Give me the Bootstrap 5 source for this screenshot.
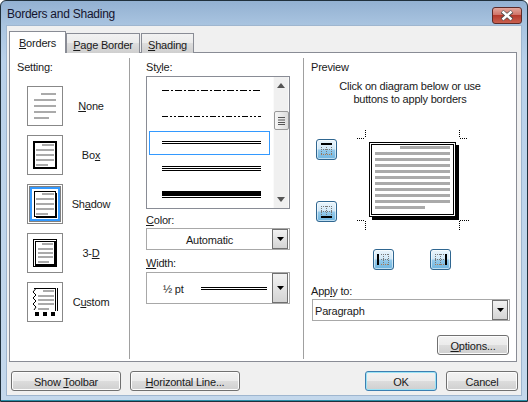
<!DOCTYPE html>
<html lang="en"><head><meta charset="utf-8"><title>Borders and Shading</title>
<link href="https://cdn.jsdelivr.net/npm/bootstrap@5.3.0/dist/css/bootstrap.min.css" rel="stylesheet">
<style>
html,body{margin:0;background:#fff}
body{font-family:"Liberation Sans",Arial,sans-serif;font-size:11px;line-height:13px;letter-spacing:-.2px;color:#1a1a1a}
u{text-underline-offset:1px}
.dlg-win{width:528px;height:402px;overflow:hidden;display:flex;flex-direction:column;border:1px solid #20303c;border-radius:6px 6px 0 0;background:linear-gradient(#93b1d2 0,#a9c4e0 24px,#b9d1ea 60px,#c4d8ec 100%);box-shadow:inset 0 -1px 0 #2a8fa8}
.dlg-title{height:24px;flex:none;padding:0 0 0 6px;font-size:12px;letter-spacing:-.25px;color:#14142e}
.dlg-title span{padding-top:2px}
.dlg-x{width:30px;height:17px;margin:4px 5px 0 0;padding:0;border:1px solid #5c2a28;border-radius:3px;background:linear-gradient(#e4a79c,#d07468 45%,#b53a2c 50%,#c9604f);line-height:0}
.dlg-main{flex:1;margin:0 5px 5px;background:#f0f0f0;padding:7px 5px 4px 3px;display:flex;flex-direction:column;box-shadow:0 0 0 1px #9fb6cf inset}
.dlg-tabs{border:0;height:21px;flex:none;align-items:flex-end;gap:1px;position:relative;z-index:1;margin-bottom:-1px;flex-wrap:nowrap}
.dlg-tab{height:20px;width:74px;padding:5px 0 0;border:1px solid #898c95;border-bottom:0;background:linear-gradient(#f2f2f2,#ebebeb 50%,#dddddd 50%,#cfcfcf);white-space:nowrap;text-align:center}
.dlg-tab.cur{height:22px;width:57px;padding-top:5px;margin-right:-1px;background:#fff;position:relative;z-index:1}
.dlg-tab.nar{width:53px}
.dlg-pane{height:310px;flex:none;background:#fff;border:1px solid #898c95;display:flex}
.cset{width:119px;padding-left:7px;flex:none}
.cstyle{width:174px;flex:none;padding-left:16px;border-left:1px solid #a0a0a0}
.cprev{flex:1;padding-left:7px;border-left:1px solid #a0a0a0}
.cset,.cstyle,.cprev{height:301px;margin-top:5px}
.lbl{height:16px;line-height:18px;display:block}
.setrow{height:40px;margin-bottom:9px;margin-left:10px}
.setrow svg{display:block;flex:none}
.setname{width:56px;text-align:center}
.stylebox{height:133px;width:144px;margin-top:2px;border:1px solid #898c95}
.stylelines{width:125px;padding-left:2px;flex:none}
.sline{height:26px;padding-left:13px;margin-right:2px}
.sline svg{display:block}
.sline.sel{height:24px;margin-top:2px;border:1px solid #3399ff;padding-left:12px;padding-bottom:2px}
.sbar{width:16px;flex:none;background:#f0f0f0;border-left:1px solid #fafafa;border-right:1px solid #fafafa}
.sbar-arrow{height:17px}
.sthumb{height:19px;width:15px;margin-top:17px;border:1px solid #999;border-radius:2px;background:linear-gradient(90deg,#f6f6f6,#dcdcdc)}
.cbox{width:144px;height:22px;margin-top:1px;border:1px solid #a8a8a8;background:#fff}
.cbox-btn{width:16px;margin:0 1px 0 auto;flex:none;border:1px solid #707070;background:linear-gradient(#f2f2f2,#d4d4d4)}
.cbox-txt{flex:1;text-align:center}
.boxtxt{padding-top:2px}
.tall{height:32px}
.clicktxt{width:200px;margin:6px 0 0 -1px;height:25px;text-align:center}
.diag{margin-top:24px}
.arrbtns{width:21px;margin:10px 20px 0 5px;gap:41px}
.bbtn{width:21px;height:21px;padding:0;border:1px solid #2f6690;border-radius:3px;background:linear-gradient(#eaf5fc,#d3e9f7 45%,#93c9ea 55%,#6fb5df);box-shadow:inset 0 0 0 1px rgba(255,255,255,.55);line-height:0;flex:none}
.bbtn svg{display:block}
.botbtns{margin:18px 0 0 16px;gap:36px}
.applybox{width:198px;height:22px;margin:1px 0 0 1px;border:1px solid #a8a8a8;background:#fff;padding-left:2px}
.wbtn{height:20px;padding:2px 0 0;font-size:11px;line-height:16px;letter-spacing:-.2px;color:#1a1a1a;border:1px solid #707070;border-radius:3px;background:linear-gradient(#f2f2f2,#ebebeb 50%,#dddddd 50%,#cfcfcf);box-shadow:inset 0 0 0 1px #fcfcfc}
.wbtn:hover{color:#1a1a1a;border-color:#707070}
.wbtn.def{border-color:#3c7fb1;box-shadow:inset 0 0 0 1px #9be3f5}
.optbtn{width:72px;margin:14px 0 0 126px;display:block}
.foot{margin:9px -1px 0 0;padding-left:2px;height:20px;align-items:flex-start}
.w110{width:110px}.w72{width:72px}
.gap-l{margin-left:9px}
.top12{margin-top:12px}.top2{margin-top:2px}
.spc{height:12px}
.wtxt{width:54px}
</style></head><body>
<div class="dlg-win">
 <div class="dlg-title d-flex align-items-center justify-content-between">
  <span>Borders and Shading</span>
  <button class="dlg-x d-flex align-items-center justify-content-center" aria-label="Close"><svg width="14" height="11" viewBox="0 0 14 11"><path d="M2 1.5 L12 9.5 M12 1.5 L2 9.5" stroke="#4a4a4a" stroke-width="4"/><path d="M2.5 1.5 L11.5 9.5 M11.5 1.5 L2.5 9.5" stroke="#fff" stroke-width="2.4"/></svg></button>
 </div>
 <div class="dlg-main">
  <div class="nav dlg-tabs">
   <div class="dlg-tab cur"><u>B</u>orders</div>
   <div class="dlg-tab"><u>P</u>age Border</div>
   <div class="dlg-tab nar"><u>S</u>hading</div>
  </div>
  <div class="dlg-pane">
   <div class="cset">
    <span class="lbl">Setting:</span>
    <div class="spc"></div>
    <div class="setrow d-flex align-items-center">
     <svg width="36" height="40" viewBox="0 0 36 40"><rect x=".5" y=".5" width="35" height="39" fill="#fff" stroke="#888"/><path d="M14 8h15M7 14h22M7 20h22M7 26h22M7 32h15" stroke="#aaa" stroke-width="2"/></svg>
     <span class="setname"><u>N</u>one</span>
    </div>
    <div class="setrow d-flex align-items-center">
     <svg width="36" height="40" viewBox="0 0 36 40"><rect x=".5" y=".5" width="35" height="39" fill="#fff" stroke="#888"/><rect x="7" y="7" width="22" height="26" fill="#fff" stroke="#000" stroke-width="2"/><path d="M15 10h12M9 15h18M9 20h18M9 25h18M9 30h12" stroke="#aaa" stroke-width="2"/></svg>
     <span class="setname">Bo<u>x</u></span>
    </div>
    <div class="setrow d-flex align-items-center">
     <svg width="36" height="40" viewBox="0 0 36 40"><rect x=".5" y=".5" width="35" height="39" fill="#fff" stroke="#888"/><rect x="2.5" y="2.500" width="31" height="35" fill="none" stroke="#000" stroke-dasharray="1 1"/><rect x="4" y="4" width="28" height="32" fill="none" stroke="#3399ff" stroke-width="2"/><rect x="7.5" y="7.5" width="21" height="25" fill="#fff" stroke="#000"/><path d="M9 33h20V9" fill="none" stroke="#000" stroke-width="2"/><path d="M15 10h12M9 15h18M9 20h18M9 25h18M9 30h12" stroke="#aaa" stroke-width="2"/></svg>
     <span class="setname">Sh<u>a</u>dow</span>
    </div>
    <div class="setrow d-flex align-items-center">
     <svg width="36" height="40" viewBox="0 0 36 40"><rect x=".5" y=".5" width="35" height="39" fill="#fff" stroke="#888"/><rect x="6.500" y="6.500" width="23" height="27" fill="#fff" stroke="#000"/><path d="M8 32.500h22M29 8v25" stroke="#000" stroke-width="2"/><rect x="8.5" y="8.5" width="19" height="23" fill="none" stroke="#000"/><path d="M15 11h11M11 16h15M11 20h15M11 24h15M11 29h11" stroke="#aaa" stroke-width="2"/></svg>
     <span class="setname">3-<u>D</u></span>
    </div>
    <div class="setrow d-flex align-items-center">
     <svg width="36" height="40" viewBox="0 0 36 40"><rect x=".5" y=".5" width="35" height="39" fill="#fff" stroke="#888"/><path d="M7 6.500h22M28.500 7v22M30.500 6v23" stroke="#000" fill="none"/><path d="M8.500 7 6 10l3 3-3 3 3 3-3 3 3 3-2 3" fill="none" stroke="#000"/><path d="M16 9h11M11 14h16M11 18h16M11 22h16M11 27h11" stroke="#aaa" stroke-width="2"/><path d="M8 30h4v4H8zM16 30h4v4h-4zM24 30h4v4h-4z" fill="#000"/></svg>
     <span class="setname">C<u>u</u>stom</span>
    </div>
   </div>
   <div class="cstyle">
    <span class="lbl">St<u>y</u>le:</span>
    <div class="stylebox d-flex">
     <div class="stylelines">
      <div class="sline d-flex align-items-center"><svg width="99" height="3"><line x1="0" x2="99" y1="1.500" y2="1.500" stroke="#000" stroke-dasharray="7 2 2 2"/></svg></div>
      <div class="sline d-flex align-items-center"><svg width="99" height="3"><line x1="0" x2="99" y1="1.500" y2="1.500" stroke="#000" stroke-dasharray="6 2 2 2 2 2"/></svg></div>
      <div class="sline sel d-flex align-items-center"><svg width="99" height="3"><path d="M0 .5h99M0 2.500h99" stroke="#000"/></svg></div>
      <div class="sline d-flex align-items-center"><svg width="99" height="5"><path d="M0 .5h99M0 2.500h99M0 4.500h99" stroke="#000"/></svg></div>
      <div class="sline d-flex align-items-center"><svg width="99" height="7"><path d="M0 2.500h99" stroke="#000" stroke-width="5"/><path d="M0 6.500h99" stroke="#000"/></svg></div>
     </div>
     <div class="sbar ms-auto d-flex flex-column">
      <div class="sbar-arrow d-flex align-items-center justify-content-center"><svg width="8" height="5"><path d="M4 0 8 5H0z" fill="#555"/></svg></div>
      <div class="sthumb d-flex align-items-center justify-content-center"><svg width="9" height="8"><path d="M1 .5h7M1 3h7M1 5.500h7M1 7.500h7" stroke="#555"/></svg></div>
      <div class="sbar-arrow mt-auto d-flex align-items-center justify-content-center"><svg width="8" height="5"><path d="M4 5 8 0H0z" fill="#555"/></svg></div>
     </div>
    </div>
    <span class="lbl top2"><u>C</u>olor:</span>
    <div class="cbox d-flex align-items-stretch">
     <span class="cbox-txt boxtxt align-self-center">Automatic</span>
     <div class="cbox-btn d-flex align-items-center justify-content-center"><svg width="7" height="4"><path d="M0 0h7L3.500 4z" fill="#000"/></svg></div>
    </div>
    <span class="lbl mt-1"><u>W</u>idth:</span>
    <div class="cbox tall top2 d-flex align-items-stretch">
     <span class="wtxt boxtxt align-self-center ps-3 flex-shrink-0">½ pt</span>
     <svg class="align-self-center" width="66" height="3"><path d="M0 .5h66M0 2.500h66" stroke="#000"/></svg>
     <div class="cbox-btn d-flex align-items-center justify-content-center"><svg width="7" height="4"><path d="M0 0h7L3.500 4z" fill="#000"/></svg></div>
    </div>
   </div>
   <div class="cprev">
    <span class="lbl">Preview</span>
    <div class="clicktxt">Click on diagram below or use<br>buttons to apply borders</div>
    <div class="diag d-flex">
     <div class="arrbtns d-flex flex-column">
      <button class="bbtn" aria-label="Top border"><svg width="19" height="19"><path d="M4 4h11" stroke="#000" stroke-width="2"/><path d="M4 9.500h11M4.500 7v8M9.500 7v8M14.500 7v8" stroke="#777" stroke-dasharray="1 1"/><path d="M4 14.500h11" stroke="#b07a50" stroke-dasharray="1 1"/></svg></button>
      <button class="bbtn" aria-label="Bottom border"><svg width="19" height="19"><path d="M4 15h11" stroke="#000" stroke-width="2"/><path d="M4 4.500h11M4 9.500h11M4.500 4v9M9.500 4v9M14.500 4v9" stroke="#777" stroke-dasharray="1 1"/></svg></button>
     </div>
     <div>
      <svg width="113" height="102" viewBox="0 0 113 102" class="d-block">
       <g stroke="#000" stroke-dasharray="1 1"><path d="M0 9.500h8M8.500 1v8M102.500 1v8M103 9.500h8M0 91.500h8M8.500 92v9M102.500 92v9M103 91.500h9"/></g>
       <rect x="15" y="16" width="87" height="75" fill="#000"/>
       <rect x="12.500" y="13.500" width="86" height="74" fill="#fff" stroke="#000"/>
       <rect x="14.500" y="15.500" width="82" height="70" fill="#fff" stroke="#000"/>
       <path d="M43 18.500h50M18 24.500h75M18 30.500h75M18 36.500h75M18 42.500h75M18 48.500h75M18 54.500h75M18 60.500h75M18 66.500h75M18 72.500h75M18 78.500h50" stroke="#aaa" stroke-width="3"/>
      </svg>
      <div class="botbtns d-flex">
       <button class="bbtn" aria-label="Left border"><svg width="19" height="19"><path d="M4 4v11" stroke="#000" stroke-width="2"/><path d="M9.500 4v11M14.500 4v11M7 4.500h8M7 9.500h8" stroke="#777" stroke-dasharray="1 1"/><path d="M7 14.500h8" stroke="#b07a50" stroke-dasharray="1 1"/></svg></button>
       <button class="bbtn" aria-label="Right border"><svg width="19" height="19"><path d="M15 4v11" stroke="#000" stroke-width="2"/><path d="M4.500 4v11M9.500 4v11M4 4.500h9M4 9.500h9" stroke="#777" stroke-dasharray="1 1"/><path d="M4 14.500h9" stroke="#b07a50" stroke-dasharray="1 1"/></svg></button>
      </div>
     </div>
    </div>
    <span class="lbl top12">App<u>l</u>y to:</span>
    <div class="applybox d-flex align-items-stretch">
     <span class="boxtxt align-self-center">Paragraph</span>
     <div class="cbox-btn d-flex align-items-center justify-content-center"><svg width="7" height="4"><path d="M0 0h7L3.500 4z" fill="#000"/></svg></div>
    </div>
    <button class="btn wbtn optbtn"><u>O</u>ptions...</button>
   </div>
  </div>
  <div class="foot d-flex">
   <button class="btn wbtn w110">Show <u>T</u>oolbar</button>
   <button class="btn wbtn w110 gap-l"><u>H</u>orizontal Line...</button>
   <button class="btn wbtn def w72 ms-auto">OK</button>
   <button class="btn wbtn w72 gap-l">Cancel</button>
  </div>
 </div>
</div>
<script src="https://cdn.jsdelivr.net/npm/bootstrap@5.3.0/dist/js/bootstrap.bundle.min.js"></script>
</body></html>
